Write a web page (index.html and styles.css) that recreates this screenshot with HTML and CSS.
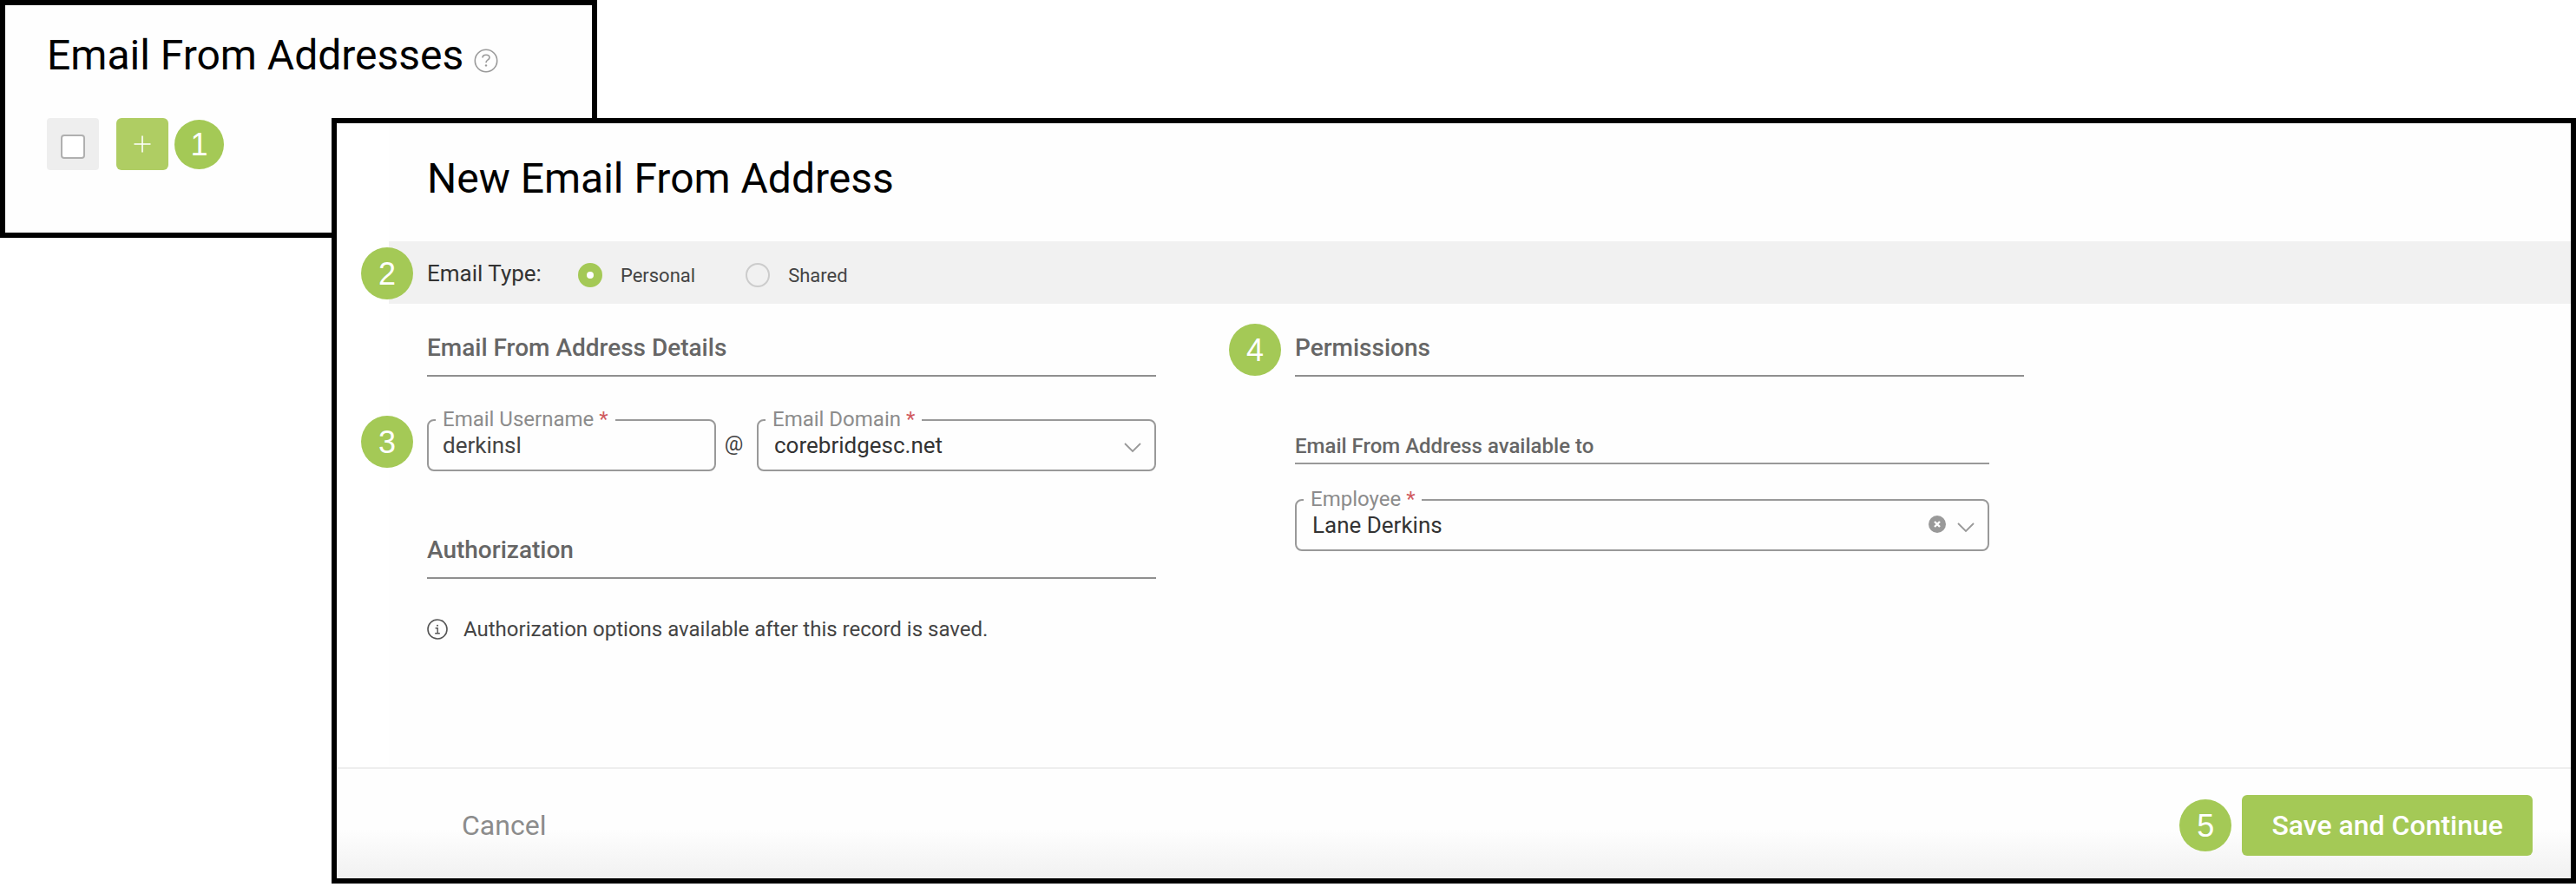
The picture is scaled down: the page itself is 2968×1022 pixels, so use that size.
FILE: index.html
```html
<!DOCTYPE html>
<html lang="en">
<head>
    <meta charset="UTF-8">
    <meta name="viewport" content="width=device-width, initial-scale=1.0">
    <title>Email From Addresses</title>
    <link rel="stylesheet" href="styles.css">
</head>
<body>
    <section class="panel list-panel">
        <div class="title-row">
            <h1>Email From Addresses</h1>
            <svg class="help-icon" viewBox="0 0 28 28" fill="none" stroke="#999" stroke-width="1.6">
                <circle cx="14" cy="14" r="12.7"/>
                <path d="M10 10.6c0-2 1.6-3.3 4-3.3s4 1.2 4 3c0 1.4-.9 2.1-2.1 2.8-1.3.8-1.9 1.5-1.9 3.1"/>
                <circle cx="14" cy="19.4" r="1.2" fill="#999" stroke="none"/>
            </svg>
        </div>
        <div class="toolbar">
            <label class="check-box"><input type="checkbox" aria-label="Select all"></label>
            <button type="button" class="add-button" aria-label="Add">
                <svg viewBox="0 0 20 20" stroke="#fff" stroke-width="1.6"><path d="M10 0.5v19M0.5 10h19"/></svg>
            </button>
            <span class="badge badge-small">1</span>
        </div>
    </section>

    <form class="panel form-panel">
        <div class="form-body">
            <h1>New Email From Address</h1>

            <div class="type-bar">
                <div class="type-options">
                    <span class="badge step">2</span>
                    <span class="type-label">Email Type:</span>
                    <label class="radio"><input type="radio" name="type" checked>Personal</label>
                    <label class="radio"><input type="radio" name="type">Shared</label>
                </div>
            </div>

            <div class="columns">
                <div class="column">
                    <h2>Email From Address Details</h2>
                    <div class="email-row">
                        <span class="badge step step-top">3</span>
                        <div class="field username">
                            <label for="username">Email Username <span class="required">*</span></label>
                            <input type="text" id="username" value="derkinsl">
                        </div>
                        <span class="at">@</span>
                        <div class="field domain">
                            <label for="domain">Email Domain <span class="required">*</span></label>
                            <select id="domain">
                                <option>corebridgesc.net</option>
                            </select>
                            <svg class="chevron" viewBox="0 0 20 12" fill="none" stroke="#999" stroke-width="1.8"><path d="M1 1l9 9 9-9"/></svg>
                        </div>
                    </div>

                    <h2 class="authorization">Authorization</h2>
                    <p class="info">
                        <svg viewBox="0 0 24 24" fill="none" stroke="#555" stroke-width="1.6">
                            <circle cx="12" cy="12" r="11"/>
                            <path d="M9.6 10.8h2.6v5.8M9.2 16.8h5.6" stroke-width="1.4"/>
                            <circle cx="12" cy="7.8" r="1" fill="#555" stroke="none"/>
                        </svg>
                        Authorization options available after this record is saved.
                    </p>
                </div>

                <div class="column">
                    <h2><span class="badge step step-top">4</span>Permissions</h2>
                    <div class="permissions">
                        <h3>Email From Address available to</h3>
                        <div class="field">
                            <label for="employee">Employee <span class="required">*</span></label>
                            <select id="employee">
                                <option>Lane Derkins</option>
                            </select>
                            <button type="button" class="clear" aria-label="Clear">
                                <svg viewBox="0 0 20 20"><circle cx="10" cy="10" r="10" fill="#999"/><path d="M7 7l6 6M13 7l-6 6" stroke="#fff" stroke-width="2.4"/></svg>
                            </button>
                            <svg class="chevron" viewBox="0 0 20 12" fill="none" stroke="#999" stroke-width="1.8"><path d="M1 1l9 9 9-9"/></svg>
                        </div>
                    </div>
                </div>
            </div>
        </div>

        <div class="footer">
            <button type="button" class="cancel">Cancel</button>
            <span class="badge">5</span>
            <button type="submit" class="save">Save and Continue</button>
        </div>
    </form>
</body>
</html>
```
FILE: styles.css
```css
* {
    box-sizing: border-box;
}
body {
    margin: 0;
    background: #fff;
    font-family: Roboto, "Liberation Sans", sans-serif;
    font-size: 24px;
    color: #444;
}
h1, h2, h3, p {
    margin: 0;
}
h1 {
    font-size: 48px;
    font-weight: 400;
    line-height: 56px;
    color: #000;
}
h2 {
    position: relative;
    padding: 6px 0 13px;
    border-bottom: 2px solid #8f8f8f;
    font-size: 28px;
    font-weight: 500;
    line-height: 36px;
    color: #666;
}
h3 {
    padding-bottom: 3px;
    border-bottom: 2px solid #999;
    font-size: 24px;
    font-weight: 500;
    line-height: 32px;
    color: #666;
}
button {
    padding: 0;
    border: none;
    background: none;
    font-family: inherit;
    cursor: pointer;
}
svg {
    display: block;
}
.panel {
    border: 6px solid #000;
    background: #fefefe;
}

/* Numbered step markers */
.badge {
    display: flex;
    align-items: center;
    justify-content: center;
    flex: none;
    width: 60px;
    height: 60px;
    padding-top: 2px;
    border-radius: 50%;
    background: #a4c956;
    color: #fff;
    font-family: "Liberation Sans", Arial, sans-serif;
    font-size: 36px;
    font-weight: 400;
    line-height: 40px;
}
.badge-small {
    width: 57px;
    height: 57px;
}
.step {
    position: absolute;
    right: calc(100% + 16px);
}
.step-top {
    top: -4px;
}

/* List panel */
.list-panel {
    width: 688px;
    max-width: 100%;
    padding: 30px 48px 72px;
}
.title-row {
    display: flex;
    align-items: center;
    gap: 12px;
}
.help-icon {
    width: 28px;
    height: 28px;
    margin-top: 12px;
}
.toolbar {
    display: flex;
    align-items: center;
    margin-top: 44px;
}
.check-box {
    display: flex;
    align-items: center;
    justify-content: center;
    width: 60px;
    height: 60px;
    padding-top: 5px;
    border-radius: 4px;
    background: #eee;
}
.check-box input {
    appearance: none;
    width: 28px;
    height: 28px;
    margin: 0;
    border: 2px solid #b0b0b0;
    border-radius: 4px;
    background: #fff;
}
.add-button {
    display: flex;
    align-items: center;
    justify-content: center;
    width: 60px;
    height: 60px;
    margin: 0 7px 0 20px;
    border-radius: 6px;
    background: #afcd63;
}
.add-button svg {
    width: 20px;
    height: 20px;
}

/* Form panel, laid over the corner of the list panel */
.form-panel {
    position: relative;
    margin: -138px 0 4px 382px;
    background: #fff;
}
.form-body {
    margin-left: 60px;
    background: #fefefe;
}
.form-body h1 {
    padding: 36px 44px 44px;
}
.type-bar {
    padding-left: 44px;
    background: #f1f1f1;
}
.type-options {
    position: relative;
    display: flex;
    align-items: center;
    height: 72px;
    padding-top: 2px;
}
.type-label {
    margin-right: 42px;
    font-size: 26px;
    color: #333;
}
.radio {
    display: flex;
    align-items: center;
    gap: 21px;
    margin-right: 58px;
    padding-top: 4px;
    font-size: 22px;
}
.radio input {
    appearance: none;
    width: 28px;
    height: 28px;
    margin: 0;
    border: 2px solid #ccc;
    border-radius: 50%;
}
.radio input:checked {
    border: 10px solid #a4c956;
    background: #fff;
}
.columns {
    display: grid;
    grid-template-columns: repeat(2, minmax(0, 840px));
    gap: 160px;
    padding: 27px 44px 143px;
}
.email-row {
    position: relative;
    display: flex;
    align-items: center;
    margin-top: 49px;
}
.at {
    width: 47px;
    padding: 0 6px 4px 0;
    text-align: center;
}
.field {
    position: relative;
}
.field label {
    position: absolute;
    top: -14px;
    left: 10px;
    padding: 0 8px;
    background: #fefefe;
    line-height: 28px;
    color: #8c8c8c;
}
.required {
    color: #d05a60;
}
.field input,
.field select {
    display: block;
    appearance: none;
    width: 100%;
    height: 60px;
    padding: 0 18px;
    border: 2px solid #999;
    border-radius: 8px;
    background: #fefefe;
    font-family: inherit;
    font-size: 26px;
    color: #333;
}
.field input {
    padding: 0 16px;
    color: #444;
}
.username {
    flex: 0 1 333px;
}
.domain {
    flex: 1;
}
.chevron {
    position: absolute;
    top: 27px;
    right: 17px;
    width: 20px;
    height: 12px;
}
.clear {
    position: absolute;
    top: 19px;
    right: 50px;
    width: 20px;
    height: 20px;
}
.authorization {
    margin-top: 67px;
}
.info {
    display: flex;
    align-items: center;
    gap: 18px;
    margin-top: 42px;
    line-height: 32px;
}
.info svg {
    width: 24px;
    height: 24px;
}
.permissions {
    margin-top: 64px;
    padding-right: 40px;
}
.permissions .field {
    margin-top: 40px;
}

/* Footer */
.footer {
    display: flex;
    align-items: center;
    padding: 30px 44px 26px 144px;
    border-top: 2px solid #eee;
    background: linear-gradient(#fefefe 55%, #f1f1f1);
}
.cancel {
    margin-right: auto;
    font-size: 32px;
    color: #8c8c8c;
}
.save {
    height: 70px;
    margin-left: 12px;
    padding: 0 34px;
    border-radius: 6px;
    background: #a4c956;
    font-size: 32px;
    font-weight: 500;
    color: #fff;
}
```
